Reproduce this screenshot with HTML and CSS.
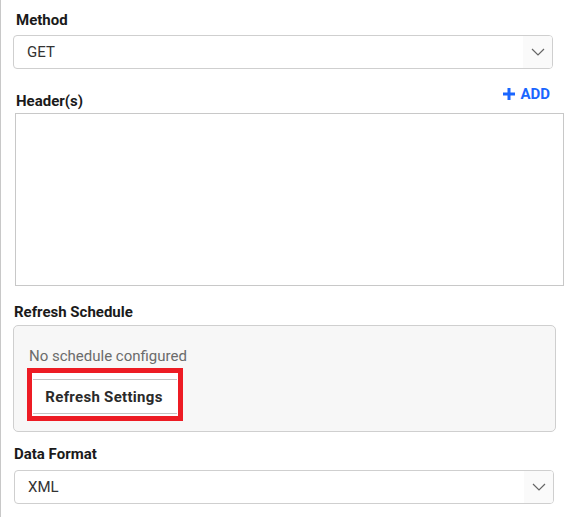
FILE: index.html
```html
<!DOCTYPE html>
<html>
<head>
<meta charset="utf-8">
<link rel="stylesheet" href="styles.css">
</head>
<body>
<div class="panel">
  <div class="field">
    <div class="label label-method">Method</div>
    <div class="select">
      <span class="select-value">GET</span>
      <span class="select-arrow"><svg width="14" height="8" viewBox="0 0 14 8"><path d="M1 1l6 6 6-6" fill="none" stroke="#666" stroke-width="1.2"/></svg></span>
    </div>
  </div>
  <div class="headers-row">
    <div class="label">Header(s)</div>
    <div class="add"><svg width="12" height="12" viewBox="0 0 12 12"><path d="M6 0v12M0 6h12" stroke="#1a66ff" stroke-width="3"/></svg><span>ADD</span></div>
  </div>
  <div class="headers-box"></div>
  <div class="label label-refresh">Refresh Schedule</div>
  <div class="schedule">
    <div class="schedule-text">No schedule configured</div>
    <div class="highlight">
      <button class="btn">Refresh Settings</button>
    </div>
  </div>
  <div class="label label-format">Data Format</div>
  <div class="select select-format">
    <span class="select-value">XML</span>
    <span class="select-arrow"><svg width="14" height="8" viewBox="0 0 14 8"><path d="M1 1l6 6 6-6" fill="none" stroke="#666" stroke-width="1.2"/></svg></span>
  </div>
</div>
</body>
</html>
```

FILE: styles.css
```css
html, body {
  margin: 0;
  padding: 0;
  background: #fff;
}
body {
  font-family: Roboto, "Liberation Sans", sans-serif;
  font-size: 15px;
  color: #222;
}
.panel {
  border-left: 1px solid #c8c8c8;
  height: 517px;
  box-sizing: border-box;
  padding-top: 12px;
  width: 576px;
}
.label {
  font-weight: 700;
  font-size: 15px;
  line-height: 16px;
  color: #1a1a1a;
}
.label-method {
  margin-left: 15px;
  margin-bottom: 7px;
}
.select {
  margin-left: 12px;
  width: 540px;
  height: 34px;
  box-sizing: border-box;
  border: 1px solid #cfcfcf;
  border-radius: 4px;
  display: flex;
  align-items: center;
  justify-content: space-between;
  overflow: hidden;
}
.select-value {
  padding-left: 13px;
  color: #333;
  font-size: 15px;
}
.select-arrow {
  width: 29px;
  height: 100%;
  background: #fafafa;
  display: flex;
  align-items: center;
  justify-content: center;
}
.headers-row {
  display: flex;
  justify-content: space-between;
  align-items: flex-end;
  margin-left: 15px;
  width: 534px;
  margin-top: 17px;
}
.headers-row .label {
  margin-bottom: -1px;
}
.add {
  display: flex;
  align-items: center;
  gap: 5px;
  color: #1a66ff;
  font-weight: 700;
  font-size: 15px;
  line-height: 16px;
  margin-bottom: 6px;
}
.headers-box {
  margin-left: 14px;
  margin-top: 5px;
  width: 549px;
  height: 173px;
  box-sizing: border-box;
  border: 1px solid #c8c8c8;
}
.label-refresh {
  margin-left: 13px;
  margin-top: 18px;
}
.schedule {
  margin-left: 12px;
  margin-top: 5px;
  width: 543px;
  height: 107px;
  box-sizing: border-box;
  border: 1px solid #cfcfcf;
  border-radius: 5px;
  background: #f7f7f7;
  padding: 22px 0 0 13px;
}
.schedule-text {
  color: #6b6b6b;
  font-size: 15px;
  line-height: 16px;
  margin-left: 2px;
}
.highlight {
  margin-top: 4px;
  width: 156px;
  height: 53px;
  box-sizing: border-box;
  border: 5px solid #ed1c24;
  background: #fff;
  display: flex;
  align-items: center;
}
.btn {
  font-family: Roboto, "Liberation Sans", sans-serif;
  font-weight: 700;
  font-size: 15px;
  color: #2a2a2a;
  background: #fff;
  border: none;
  border-top: 1px solid #c4c4c4;
  border-bottom: 1px solid #c4c4c4;
  width: 144px;
  height: 35px;
  margin: 4px 1px 0 1px;
  padding: 0 2px 0 0;
  letter-spacing: 0.3px;
}
.label-format {
  margin-left: 13px;
  margin-top: 14px;
  margin-bottom: 8px;
}
.select-format {
  margin-left: 13px;
  width: 540px;
}
```
